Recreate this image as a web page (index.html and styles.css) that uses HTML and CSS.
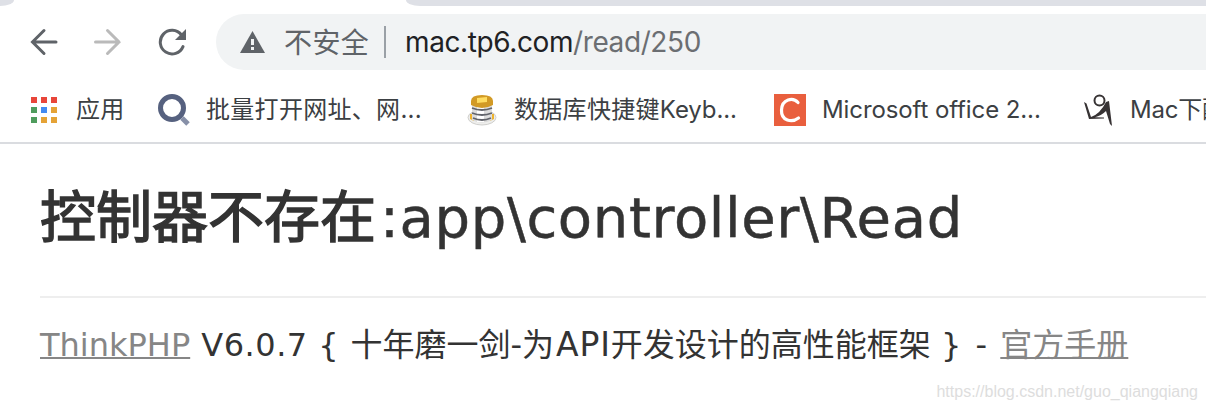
FILE: index.html
```
<!DOCTYPE html>
<html lang="zh-CN">
    <head>
        <meta charset="utf-8">
        <title>mac.tp6.com/read/250</title>
        <link rel="stylesheet" href="styles.css">
    </head>
    <body>
        <div class="tabs">
            <div class="tab-left"></div>
            <div class="tab-right"></div>
        </div>
        <div class="toolbar">
            <svg class="nav" width="28" height="28" viewBox="0 0 28 28"><path d="M26 14H3M14 2.500L2.500 14L14 25.500"/></svg>
            <svg class="nav off" width="28" height="28" viewBox="0 0 28 28"><path d="M1.500 14H25M13.500 2.500L25 14L13.500 25.500"/></svg>
            <svg class="reload" width="30" height="28" viewBox="0 0 30 28"><path class="ring" d="M25 18.600A11.800 11.800 0 1 1 23.500 7"/><path class="tip" d="M28 1V12H17Z"/></svg>
            <div class="address">
                <svg class="warn" width="25" height="22" viewBox="0 0 25 22"><path d="M12.500 0L25 22H0Z"/><path class="mark" d="M11 8h3v6h-3zM11 16h3v3h-3z"/></svg>
                <span class="unsafe">不安全</span>
                <span class="split"></span>
                <span class="url">mac.tp6.com<span>/read/250</span></span>
            </div>
        </div>
        <div class="bookmarks">
            <div class="mark-item apps">
                <svg width="26" height="26" viewBox="0 0 26 26">
                    <path fill="#e8463a" d="M0 0h6v6H0zM10 0h6v6h-6zM20 0h6v6h-6z"/>
                    <path fill="#4f9c5d" d="M0 10h6v6H0zM0 20h6v6H0z"/>
                    <path fill="#438bf2" d="M10 10h6v6h-6z"/>
                    <path fill="#e5a336" d="M20 10h6v6h-6zM10 20h6v6h-6zM20 20h6v6h-6z"/>
                </svg>
                <span>应用</span>
            </div>
            <div class="mark-item batch">
                <svg width="32" height="32" viewBox="0 0 32 32"><path d="M24 24l6 6" stroke="#8790a8" stroke-width="5"/><circle cx="14" cy="14" r="11.500" fill="none" stroke="#56617f" stroke-width="5"/></svg>
                <span>批量打开网址、网...</span>
            </div>
            <div class="mark-item keys">
                <svg width="32" height="32" viewBox="0 0 32 32">
                    <ellipse cx="16" cy="23.500" rx="14" ry="7.500" fill="#eeeeec" stroke="#cfcfcd"/>
                    <path d="M4 20h4v7l-4-2zM24 20h4v5l-4 2z" fill="#edb22d"/>
                    <path d="M6 8v18q10 5 20 0V8z" fill="#dcdcdc"/>
                    <path d="M11 10h7v18h-7z" fill="#fff"/>
                    <path d="M6 14q10 4 20 0M6 19q10 4 20 0M7 24q9 4 18 0" fill="none" stroke="#62646b" stroke-width="1.800"/>
                    <path d="M5 7q0-6 11-6t11 6v4q-11 6-22 0z" fill="#d29a25"/>
                    <path d="M11 4l10-1v5l-10 1z" fill="#ffdd61"/>
                </svg>
                <span>数据库快捷键<span class="latin">Keyb...</span></span>
            </div>
            <div class="mark-item office">
                <svg width="32" height="32" viewBox="0 0 32 32"><path fill="#e95f3e" d="M0 0h32v32H0z"/><path d="M24 8.500C19 3 8 5 7.500 16C7 27 18 29 24.500 24" fill="none" stroke="#fff" stroke-width="3.200" stroke-linecap="round"/></svg>
                <span class="latin">Microsoft office 2...</span>
            </div>
            <div class="mark-item mac">
                <svg width="28" height="32" viewBox="0 0 28 32"><circle cx="15.500" cy="6.500" r="5" fill="none" stroke="#373334" stroke-width="2"/><path fill="#373334" d="M0 8L2.500 9.500L7 23Q16 20 22 8L25 7L28 32L26 30L22 17Q17 22 11 23.200L20 23.500V24.500L5 25Z"/></svg>
                <span>Mac下配</span>
            </div>
        </div>
        <div class="content">
            <h1>控制器不存在<span>:app\controller\Read</span></h1>
            <p class="copyright"><a class="brand" href="#">ThinkPHP</a> <span class="version">V6.0.7 {</span> <span class="slogan">十年磨一剑-为<span>API</span>开发设计的高性能框架</span> <span class="end">} -</span> <a class="manual" href="#">官方手册</a></p>
            <div class="watermark">https://blog.csdn.net/guo_qiangqiang</div>
        </div>
    </body>
</html>
```
FILE: styles.css
```
* {box-sizing: border-box;}
body {margin: 0; height: 410px; overflow: hidden; background-color: #fff; color: #3c4043; font-family: Inter, "Noto Sans CJK SC", sans-serif; white-space: nowrap;}
svg {display: block; flex-shrink: 0;}
.tabs {height: 6px; display: flex; justify-content: space-between;}
.tab-left {width: 14px; background-color: #dee0e6; border-radius: 0 0 14px 0 / 0 0 6px 0;}
.tab-right {width: 800px; background-color: #dee0e6; border-radius: 0 0 0 14px / 0 0 0 6px;}

.toolbar {height: 72px; padding: 0 0 0 30px; display: flex; align-items: center;}
.nav {margin-right: 36px; fill: none; stroke: #5f6368; stroke-width: 3; stroke-linecap: round;}
.off {stroke: #bababa;}
.reload {margin-right: 28px;}
.ring {fill: none; stroke: #5f6368; stroke-width: 3; stroke-linecap: round;}
.tip {fill: #5f6368;}
.address {flex: 1; height: 56px; padding-left: 24px; display: flex; align-items: center; background-color: #f1f3f4; border-radius: 28px 0 0 28px; font-size: 28px;}
.warn {fill: #5f6368;}
.warn .mark {fill: #f1f3f4;}
.unsafe {width: 86px; margin-left: 19px; padding-bottom: 2px; color: #5f6368; letter-spacing: 0.4px;}
.split {width: 2px; height: 32px; margin: 0 19px 0 14px; background-color: #9aa0a6;}
.url {color: #202124; letter-spacing: -0.4px;}
.url span {color: #6b6e72;}

.bookmarks {height: 66px; border-bottom: 2px solid #dadce0; padding-bottom: 1px; display: flex; align-items: center; font-size: 24px;}
.mark-item {display: flex; align-items: center; gap: 16px; flex-shrink: 0;}
.mark-item > span {padding-bottom: 4px; letter-spacing: 0.3px;}
.mark-item .latin {letter-spacing: -0.1px;}
.mark-item > .latin {padding-bottom: 1px;}
.apps {width: 127px; margin-left: 31px; gap: 19px;}
.batch {width: 308px;}
.keys {width: 308px;}
.office {width: 310px;}
.mac {gap: 18px;}
.mac > span {letter-spacing: -0.2px;}

.content {padding: 0 0 0 40px; color: #333; font-family: "DejaVu Sans", "Noto Sans CJK SC", sans-serif;}
h1 {height: 154px; margin: 0; padding-top: 28px; border-bottom: 2px solid #eee; font-size: 56px; line-height: 92px; font-weight: normal; -webkit-text-stroke: 1.5px #333;}
h1 span {margin-left: 4px; letter-spacing: 0.65px; -webkit-text-stroke: 0.5px #333;}
.copyright {margin: 23px 0 0; font-size: 32px; line-height: 48px;}
.copyright a {color: #868686; text-decoration: underline; text-decoration-thickness: 2px;}
.version {margin-left: 1px; letter-spacing: 0.5px;}
.slogan {margin-left: 1px;}
.slogan span {margin-left: 2px; font-size: 33px; letter-spacing: 0.9px;}
.end {letter-spacing: 2px;}
.manual {margin-left: 1px;}
.watermark {margin: 13px 8px 0 0; color: #ddd; font-family: "Liberation Sans", sans-serif; font-size: 16px; line-height: 20px; text-align: right;}
```
